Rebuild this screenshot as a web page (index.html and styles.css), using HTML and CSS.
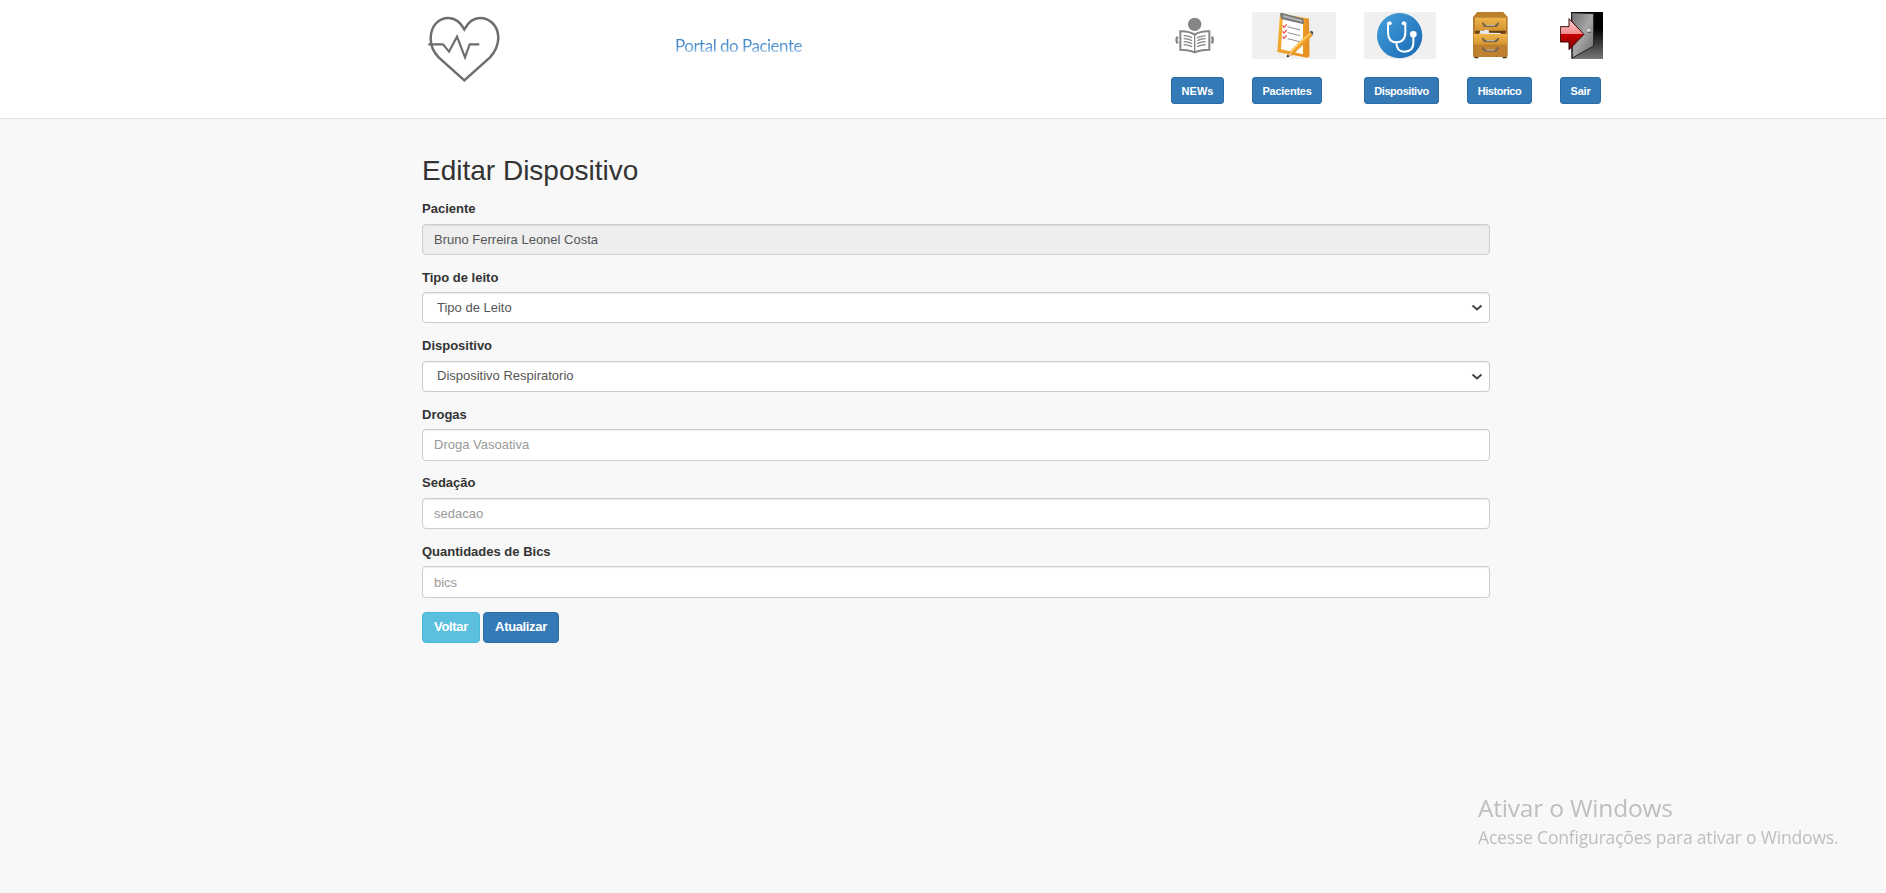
FILE: index.html
```html
<!DOCTYPE html>
<html lang="pt-BR">
<head>
<meta charset="utf-8">
<title>Portal do Paciente</title>
<link rel="stylesheet" href="styles.css">
</head>
<body>
<header class="topbar">
  <a class="logo" href="#">
    <svg width="80" height="80" viewBox="0 0 240 240" fill="none" stroke="#6d6d6d" stroke-width="7.5">
      <path d="M127 205L50 136Q25 110 26 78C27 40 51 18 79 18Q108 18 127 52Q146 18 174 18C202 18 229 40 229 78Q228 110 204 136Z"/>
      <path d="M19 97H63L81 119L105 74L129 136L143 97H172" stroke-width="6.5"/>
    </svg>
  </a>
  <div class="brand">Portal do Paciente</div>
  <nav class="menu">
    <div class="item">
      <svg width="53" height="47" viewBox="0 0 159 141">
        <circle cx="71" cy="37" r="20" fill="#858585"/>
        <path d="M20 74q-7 9 0 20M122 74q7 9 0 20" stroke="#858585" stroke-width="7" fill="none"/>
        <path d="M28 58Q54 57 71 68Q88 57 115 58V113Q88 113 71 121Q54 113 28 113Z" fill="#fff" stroke="#858585" stroke-width="6"/>
        <path d="M71 68V120M38 71q14 0 25 6M38 80q14 0 25 6M38 89q14 0 25 6M38 98q14 0 25 6M79 86q11-6 25-6M79 95q11-6 25-6M79 104q11-6 25-6" stroke="#858585" stroke-width="4" fill="none"/>
        <path d="M79 78q11-6 26-7" stroke="#858585" stroke-width="5" stroke-dasharray="5 1.5" fill="none"/>
      </svg>
      <a class="btn btn-xs btn-news" href="#">NEWs</a>
    </div>
    <div class="item">
      <svg width="84" height="47" viewBox="0 0 252 141">
        <defs>
          <linearGradient id="gold" x1="0" y1="0" x2="1" y2="1"><stop offset="0" stop-color="#f7b73c"/><stop offset="1" stop-color="#e88a18"/></linearGradient>
          <pattern id="check" width="6" height="6" patternUnits="userSpaceOnUse"><path fill="#f3f3f3" d="M0 0h6v6H0z"/><path fill="#ededed" d="M0 0h3v3H0zM3 3h3v3H3z"/></pattern>
        </defs>
        <path fill="url(#check)" d="M0 0h252v141H0z"/>
        <path d="M84 4L171 20L172 133L166 137L76 120Z" fill="url(#gold)"/>
        <path d="M160 19L171 20L172 133L166 137Z" fill="#e39227"/>
        <path d="M93 13L153 24V127L87 112Z" fill="#fff"/>
        <path d="M84 6L88 2L155 20V37L88 21Z" fill="#777"/>
        <path d="M93 9L150 24V30L92 15Z" fill="#b5b5b5"/>
        <path d="M107 44l37 10M107 62l37 9M107 80l36 9" stroke="#777" stroke-width="2.5"/>
        <path d="M92 41l4 5 8-9M92 58l4 5 8-9M92 74l4 5 8-9" stroke="#e94240" stroke-width="3.5" fill="none"/>
        <path d="M106 134L113 119L173 60L182 69L121 129Z" fill="#f3a42d" stroke="#cf791b" stroke-width="1.5"/>
        <path d="M115 120L174 63" stroke="#ffdb77" stroke-width="3.5"/>
        <path d="M113 120L121 129L106 134Z" fill="#e7c396"/>
        <path d="M105 135l2-6 4 4z" fill="#222" stroke="#222" stroke-width="2"/>
        <path d="M174 59L179 56L184 61L182 68Z" fill="#444"/>
      </svg>
      <a class="btn btn-xs btn-patients" href="#">Pacientes</a>
    </div>
    <div class="item">
      <svg width="72" height="47" viewBox="0 0 216 141">
        <defs><linearGradient id="blue" x1="0" y1="0" x2="1" y2="1"><stop offset="0" stop-color="#46a0dc"/><stop offset="1" stop-color="#1768b2"/></linearGradient></defs>
        <path fill="url(#check)" d="M0 0h216v141H0z"/>
        <circle cx="107" cy="71" r="68" fill="url(#blue)"/>
        <g fill="none" stroke="#fff" stroke-width="6" stroke-linecap="round">
          <path d="M79 34H72V61Q72 91 97 91Q124 91 124 61V34H117"/>
          <path d="M97 92Q98 119 121 119Q148 119 148 94V72"/>
        </g>
        <g fill="#fff"><circle cx="77" cy="34" r="6"/><circle cx="119" cy="34" r="6"/><circle cx="148" cy="67" r="10"/></g>
      </svg>
      <a class="btn btn-xs btn-device" href="#">Dispositivo</a>
    </div>
    <div class="item">
      <svg width="47" height="47" viewBox="0 0 141 141">
        <defs><linearGradient id="wood" x1="0" y1="0" x2="0" y2="1"><stop offset="0" stop-color="#efb64a"/><stop offset="1" stop-color="#d59430"/></linearGradient></defs>
        <path d="M22 131h12v8H22zM107 131h12v8h-12z" fill="#4d371d"/>
        <path d="M31 0H108L122 15V131Q122 135 118 135H22Q18 135 18 131V15Z" fill="#b77c2e"/>
        <path d="M31 1H108L120 15H20Z" fill="#bd812b"/>
        <path d="M24 17H117V54H24Z" fill="url(#wood)"/>
        <path d="M25 57H116V65H25Z" fill="#684012"/>
        <path d="M37 65l3-10 10 2 3-4 12 1 1 8 35 1v5z" fill="#e7e9e8"/>
        <path d="M20 66H120V98H20Z" fill="url(#wood)"/>
        <path d="M25 101H116V131H25Z" fill="#c08230"/>
        <path d="M48 34q3 9 10 8h25q7 1 10-8M48 80q3 9 10 8h25q7 1 10-8M48 108q3 9 10 8h25q7 1 10-8" fill="none" stroke="#74644a" stroke-width="6" stroke-linecap="round"/>
        <path d="M58 40h25M58 86h25M58 114h25" stroke="#c9c3b5" stroke-width="3"/>
      </svg>
      <a class="btn btn-xs btn-history" href="#">Historico</a>
    </div>
    <div class="item">
      <svg width="43" height="47" viewBox="0 0 129 141">
        <defs>
          <linearGradient id="dark" x1="0" y1="0" x2="0" y2="1"><stop offset=".35" stop-color="#000"/><stop offset="1" stop-color="#777"/></linearGradient>
          <linearGradient id="door" x1="0" y1="0" x2="1" y2="1"><stop offset="0" stop-color="#6e6e6e"/><stop offset=".5" stop-color="#a6a6a6"/><stop offset="1" stop-color="#666"/></linearGradient>
          <linearGradient id="red" x1="0" y1="0" x2="0" y2="1"><stop offset="0" stop-color="#ffd0d0"/><stop offset=".48" stop-color="#f38c8c"/><stop offset=".5" stop-color="#c80000"/><stop offset="1" stop-color="#830000"/></linearGradient>
        </defs>
        <path d="M33 0H129V141H33Z" fill="url(#dark)"/>
        <path d="M35 2L101 5V102L37 138Z" fill="url(#door)" stroke="#222" stroke-width="3"/>
        <circle cx="86" cy="55" r="5" fill="#ddd"/><path d="M83 61h9" stroke="#555" stroke-width="3"/>
        <path d="M1 44H27V20L72 67L27 113V90H1Z" fill="url(#red)" stroke="#38090c" stroke-width="3"/>
      </svg>
      <a class="btn btn-xs btn-exit" href="#">Sair</a>
    </div>
  </nav>
</header>
<main class="container">
  <h2 class="title">Editar Dispositivo</h2>
  <form>
    <div class="form-group">
      <label for="paciente">Paciente</label>
      <input class="form-control" id="paciente" value="Bruno Ferreira Leonel Costa" disabled>
    </div>
    <div class="form-group">
      <label for="leito">Tipo de leito</label>
      <div class="select">
        <select class="form-control" id="leito"><option>Tipo de Leito</option></select>
        <svg class="chevron" width="12" height="8" viewBox="0 0 12 8"><path d="M1.5 1.5L6 5.5L10.5 1.5"/></svg>
      </div>
    </div>
    <div class="form-group">
      <label for="dispositivo">Dispositivo</label>
      <div class="select">
        <select class="form-control" id="dispositivo"><option>Dispositivo Respiratorio</option></select>
        <svg class="chevron" width="12" height="8" viewBox="0 0 12 8"><path d="M1.5 1.5L6 5.5L10.5 1.5"/></svg>
      </div>
    </div>
    <div class="form-group">
      <label for="drogas">Drogas</label>
      <input class="form-control" id="drogas" placeholder="Droga Vasoativa">
    </div>
    <div class="form-group">
      <label for="sedacao">Sedação</label>
      <input class="form-control" id="sedacao" placeholder="sedacao">
    </div>
    <div class="form-group">
      <label for="bics">Quantidades de Bics</label>
      <input class="form-control" id="bics" placeholder="bics">
    </div>
    <div class="actions">
      <a class="btn btn-info" href="#">Voltar</a>
      <a class="btn btn-update" href="#">Atualizar</a>
    </div>
  </form>
</main>
<aside class="watermark">
  <div class="watermark-title">Ativar o Windows</div>
  <div class="watermark-text">Acesse Configurações para ativar o Windows.</div>
</aside>
</body>
</html>
```
FILE: styles.css
```css
* { box-sizing: border-box; }
body {
  margin: 0;
  background: #f8f8f8;
  color: #333;
  font: 13px/18.5px "Liberation Sans", Arial, sans-serif;
}
.topbar {
  display: flex;
  align-items: flex-start;
  height: 119px;
  padding-left: 422px;
  background: #fff;
  border-bottom: 1px solid #e2e2e2;
}
.logo { display: block; width: 253px; padding-top: 12px; }
.logo svg { display: block; }
.brand {
  width: 496px;
  padding-top: 34px;
  font: 17px/24px Lato, sans-serif;
  letter-spacing: -0.5px;
  color: transparent;
  background: linear-gradient(#3c82c4 25%, #5b9bd5 60%, #a9cdec 76%) no-repeat 0 34px / 100% 24px;
  -webkit-background-clip: text;
  background-clip: text;
}
.menu { display: flex; gap: 28px; padding-top: 12px; }
.item { display: flex; flex-direction: column; align-items: flex-start; gap: 18px; }
.item svg { display: block; }
.btn {
  display: inline-block;
  padding: 4px 0 6px;
  border: 1px solid #2e6da4;
  border-radius: 4px;
  background: #337ab7;
  color: #fff;
  font-weight: bold;
  line-height: 19px;
  text-align: center;
  text-decoration: none;
  white-space: nowrap;
}
.btn-xs {
  padding: 5px 0 4px;
  border-radius: 3px;
  font-size: 11px;
  line-height: 16px;
}
.btn-news { width: 53px; }
.btn-patients { width: 70px; letter-spacing: -0.25px; }
.btn-device { width: 75px; letter-spacing: -0.45px; }
.btn-history { width: 65px; letter-spacing: -0.45px; }
.btn-exit { width: 41px; letter-spacing: -0.2px; }
.btn-info { width: 58px; background: #5bc0de; border-color: #46b8da; letter-spacing: -0.35px; }
.btn-update { width: 76px; letter-spacing: -0.35px; }
.container { width: 1068px; margin-left: 422px; padding-top: 36px; }
.title { margin: 0 0 14px; font-size: 28px; font-weight: 500; line-height: 31px; }
.form-group { margin-bottom: 13.7px; }
.form-group label { display: block; margin-bottom: 5px; font-weight: bold; }
.form-control {
  display: block;
  width: 100%;
  height: 31.4px;
  padding: 5px 11px;
  border: 1px solid #ccc;
  border-radius: 4px;
  background-color: #fff;
  box-shadow: inset 0 1px 1px rgba(0, 0, 0, .075);
  color: #555;
  font: inherit;
}
.form-control::placeholder { color: #999; opacity: 1; }
.form-control:disabled { background-color: #eee; }
.select { position: relative; }
.select .form-control { appearance: none; padding-left: 14px; }
.chevron {
  position: absolute;
  right: 7px;
  top: 12px;
  fill: none;
  stroke: #444;
  stroke-width: 2;
}
.actions { display: flex; gap: 3px; padding-top: 1px; }
.watermark {
  position: fixed;
  left: 1478px;
  top: 791px;
  color: #bebebe;
  font-family: "Open Sans", "Noto Sans", sans-serif;
  white-space: nowrap;
}
.watermark-title { font-size: 24.5px; line-height: 34px; letter-spacing: -0.2px; }
.watermark-text { font-size: 17.5px; line-height: 25px; letter-spacing: -0.18px; }
```
